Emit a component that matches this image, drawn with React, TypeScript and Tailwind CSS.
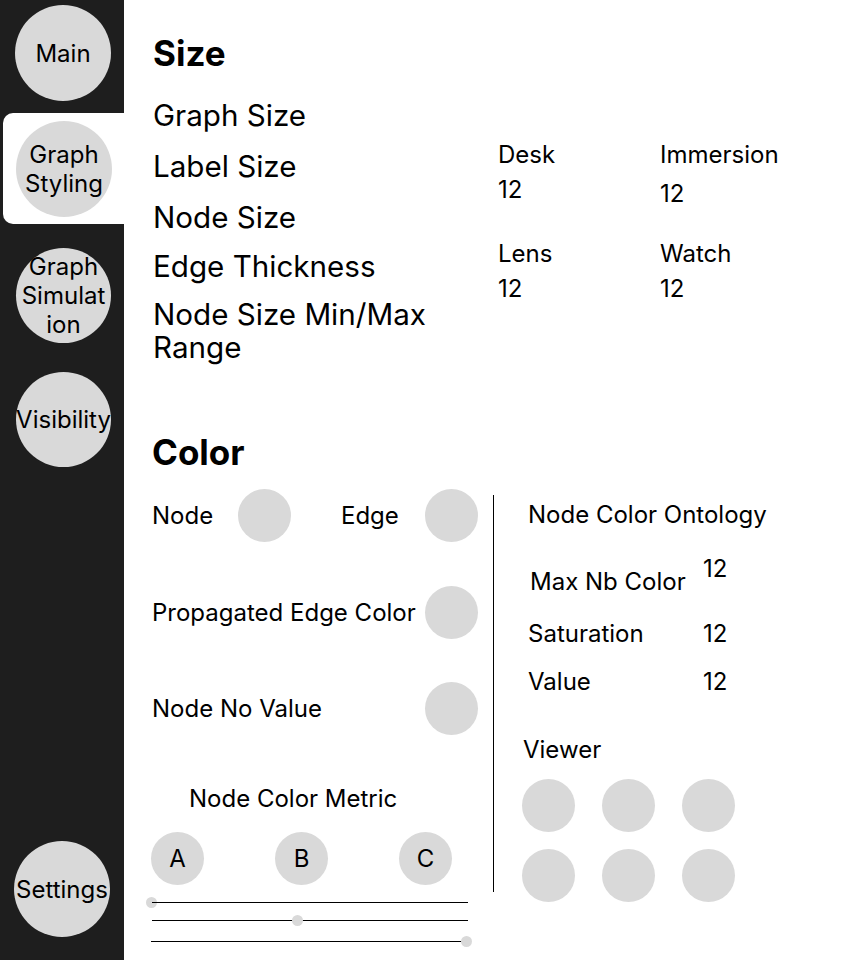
import React from "react";

function Dot({ className = "" }: { className?: string }) {
  return <div className={`h-[53px] w-[53px] shrink-0 rounded-full bg-[#d9d9d9] ${className}`} />;
}

function NavCircle({ label, className = "" }: { label: string; className?: string }) {
  return (
    <div
      className={`flex h-[96px] w-[96px] items-center justify-center rounded-full bg-[#d9d9d9] text-center text-[24px] leading-[29px] text-black ${className}`}
    >
      {label}
    </div>
  );
}

function Slider({ left, lineOnTop = false }: { left: string; lineOnTop?: boolean }) {
  return (
    <div className="relative h-px w-[316px]">
      <div className={`absolute top-[-5px] h-[11px] w-[11px] rounded-full bg-[#d9d9d9] ${left}`} />
      <div className={`absolute inset-0 bg-black ${lineOnTop ? "" : "-z-10"}`} />
    </div>
  );
}

export default function App() {
  return (
    <div className="flex min-h-[960px] w-[860px] bg-white font-['Inter',sans-serif] text-black">
      {/* side nav */}
      <aside className="flex w-[124px] shrink-0 flex-col bg-[#1e1e1e]">
        <NavCircle label="Main" className="ml-[15px] mt-[5px]" />
        <div className="ml-[3px] mt-[12px] h-[111px] rounded-l-[10px] bg-white pl-[13px] pt-[8px]">
          <NavCircle label="Graph Styling" />
        </div>
        <div className="ml-[16px] mt-[24px] flex h-[95px] w-[95px] items-center justify-center rounded-full bg-[#d9d9d9] px-[5px] text-center text-[24px] leading-[29px] [overflow-wrap:anywhere]">
          Graph Simulation
        </div>
        <div className="ml-[16px] mt-[29px] flex h-[95px] w-[95px] items-center justify-center rounded-full bg-[#d9d9d9] text-[24px]">
          Visibility
        </div>
        <NavCircle label="Settings" className="mb-[23px] ml-[14px] mt-auto" />
      </aside>

      <main className="relative isolate flex-1 pl-[28px]">
        {/* Size */}
        <section className="pl-px">
          <h2 className="mt-[36px] text-[35px] font-bold leading-[35px]">Size</h2>
          <div className="mt-[28px] flex items-start">
            <div className="flex w-[300px] flex-col text-[29.6px] leading-[33px]">
              <div>Graph Size</div>
              <div className="mt-[18px]">Label Size</div>
              <div className="mt-[18px]">Node Size</div>
              <div className="mt-[16px]">Edge Thickness</div>
              <div className="mt-[15px]">Node Size Min/Max Range</div>
            </div>
            <div className="ml-[45px] mt-[41px] grid grid-cols-[162px_162px] content-start gap-y-[31px] text-[24px] leading-[29px]">
              <div>
                <div>Desk</div>
                <div className="mt-[6px]">12</div>
              </div>
              <div>
                <div>Immersion</div>
                <div className="mt-[10px]">12</div>
              </div>
              <div>
                <div>Lens</div>
                <div className="mt-[6px]">12</div>
              </div>
              <div>
                <div>Watch</div>
                <div className="mt-[6px]">12</div>
              </div>
            </div>
          </div>
        </section>

        {/* Color */}
        <section>
          <h2 className="mt-[71px] text-[35px] font-bold leading-[35px]">Color</h2>
          <div className="mt-[19px] flex items-start text-[24px] leading-[29px]">
            <div className="flex w-[326px] flex-col">
              <div className="flex h-[53px] items-center">
                <span className="w-[86px]">Node</span>
                <Dot />
                <span className="ml-[50px] w-[84px]">Edge</span>
                <Dot />
              </div>
              <div className="mt-[44px] flex h-[53px] items-center justify-between">
                <span>Propagated Edge Color</span>
                <Dot />
              </div>
              <div className="mt-[43px] flex h-[53px] items-center justify-between">
                <span>Node No Value</span>
                <Dot />
              </div>
              <div className="ml-[37px] mt-[49px]">Node Color Metric</div>
              <div className="-ml-px mt-[19px] flex gap-[71px]">
                {["A", "B", "C"].map((l) => (
                  <div
                    key={l}
                    className="flex h-[53px] w-[53px] items-center justify-center rounded-full bg-[#d9d9d9]"
                  >
                    {l}
                  </div>
                ))}
              </div>
              <div className="mt-[17px]">
                <Slider left="left-[-6px]" lineOnTop />
              </div>
              <div className="mt-[17px]">
                <Slider left="left-[140px]" />
              </div>
              <div className="-ml-px mt-[20px]">
                <Slider left="left-[310px]" />
              </div>
            </div>

            <div className="ml-[15px] mt-[6px] h-[397px] w-px shrink-0 bg-black" />

            <div className="flex flex-col pl-[34px] pt-[11px]">
              <div>Node Color Ontology</div>
              <div className="mt-[25px] flex items-start">
                <span className="mt-[13px] w-[175px] pl-[2px]">Max Nb Color</span>
                <span>12</span>
              </div>
              <div className="mt-[23px] flex">
                <span className="w-[175px]">Saturation</span>
                <span>12</span>
              </div>
              <div className="mt-[19px] flex">
                <span className="w-[175px]">Value</span>
                <span>12</span>
              </div>
              <div className="-ml-[5px] mt-[39px]">Viewer</div>
              <div className="-ml-[6px] mt-[15px] grid grid-cols-[53px_53px_53px] gap-x-[27px] gap-y-[17px]">
                {[0, 1, 2, 3, 4, 5].map((i) => (
                  <Dot key={i} />
                ))}
              </div>
            </div>
          </div>
        </section>
      </main>
    </div>
  );
}
